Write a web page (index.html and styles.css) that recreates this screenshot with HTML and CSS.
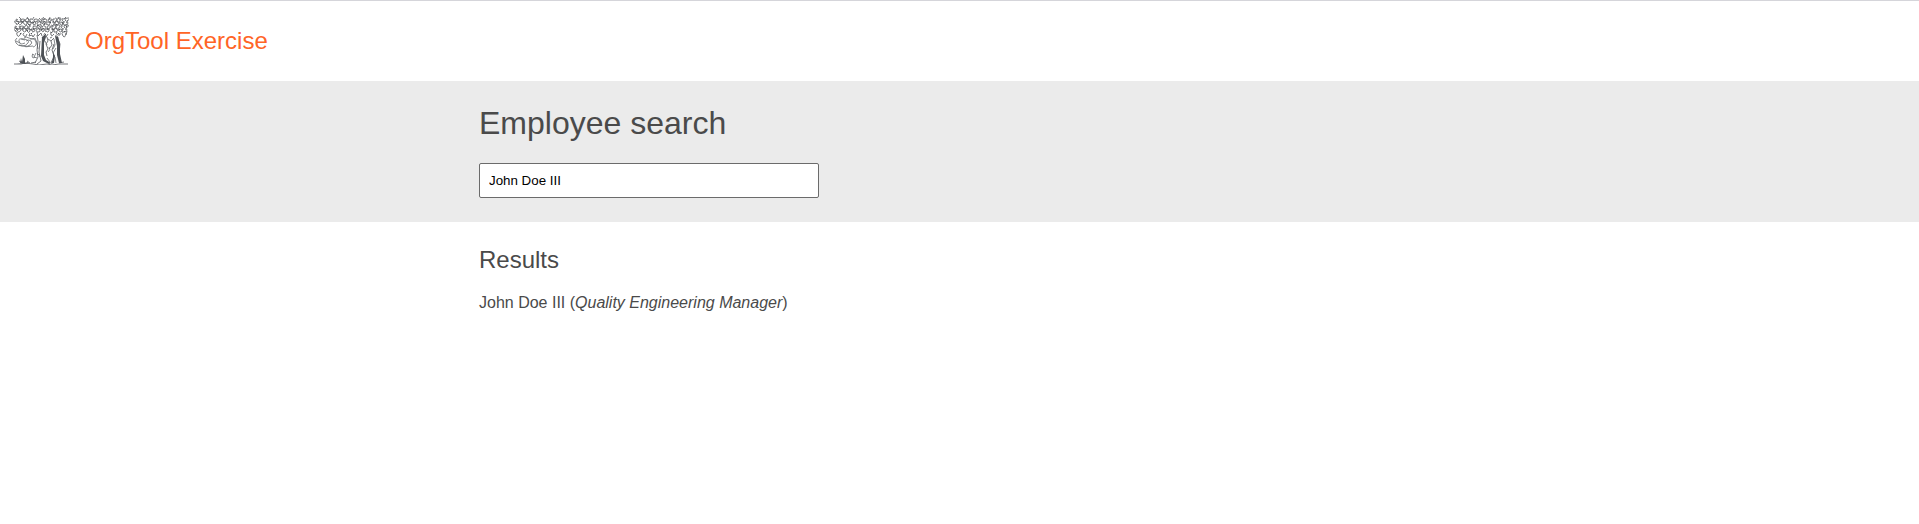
FILE: index.html
```html
<!DOCTYPE html>
<html lang="en">
<head>
<meta charset="utf-8">
<title>OrgTool Exercise</title>
<link rel="stylesheet" href="styles.css">
</head>
<body>
<header class="site-header">
  <svg class="logo" viewBox="0 0 55 48" role="img" aria-label="Tree logo">
    <defs>
      <g id="leaves">
        <path d="M3 2q-2-2-2 0t3 2 1-3M8 1q-3 0-2 2t3 0-1-2M12 4q-3-1-1-3t3 1-2 2M17 1q-3-1-2 2t3 1M22 3q-2 2-3 0t2-2 1 3M25 0q-2 1-1 3t3-1-2 0M31 1q-2-1-3 1t2 2 1-3M36 4q-3 0-3-2t3-1-1 2M40 1q-3-1-2 2t3 0-1-3M45 3q-2 2-3 0t2-3 1 3M49 1q-3-1-2 1t3 2M53 3q-2 1-3-1t3-2-1 3"/>
      </g>
    </defs>
    <g class="foliage">
      <use href="#leaves" x="1" y="1"/>
      <use href="#leaves" x="-55" y="4" transform="scale(-1 1)"/>
      <use href="#leaves" x="0" y="8"/>
      <use href="#leaves" x="-54" y="11" transform="scale(-1 1)"/>
      <path d="M4 15q-2 0-1 3t3 0 1-2M10 16q-2 1 0 3t3-2M16 16l-1 3 3-1 1 2 2-3M23 15l1 4 3-3 1 3M31 16q-2 2 0 3t3-2M38 15q-2 1-1 3t3-1M43 15q-2 2 1 3t2-2M49 15q-2 1 0 4t3-3M53 14l-1 4"/>
      <path d="M5 0l2 2M13 0l2 3M20 0l-2 3M29 0l2 3M36 0l-1 3M44 0l2 3M52 0l-2 2"/>
    </g>
    <g class="specks">
      <path d="M4 6l1 1M9 4l-1 2M14 7l2 1M19 5l1 1M24 8l-1 1M30 6l1 2M37 5l-1 1M42 7l1 1M48 5l1 2M52 9l1 1M2 11l1 2M8 12l2 0M13 13l1 1M20 11l-1 2M27 13l1-1M33 11l1 2M38 13l2-1M46 12l-1 1M50 14l1 1M6 17l1-1M17 16l1 1M31 17l1 1M44 17l1-1"/>
    </g>
    <g class="ink-light">
      <path d="M3 21q-3 2-1 5t6 3 6-3-4-4-5 2 2 3 4-1M10 21q2-2 5 0t6 0M12 24q3-2 5 0t-1 4-5 1M16 22q5-1 6 3t-3 5M5 28q7 3 14 1M7 22l4 1M2 24l4 2M21 21l2 5 1 6"/>
      <path d="M19 37q-2 2 0 4l2-1M22 36l-2 4 3 1M23 37q3 0 3 3M18 37l2 1"/>
    </g>
    <g class="ink">
      <path d="M23 18l1 6-1 9 1 7-3 6M26 24l-1 11 2 9-4 3"/>
      <path d="M28 21q2-4 5-1l1 4-2 3 2 5-2 3 1 4M41 19q3-1 3 3l2 5-1 9 1 9M40 21l-3 3-3-2M37 24l1 4-3 4M40 27l-2 6 2 6-3 7M36 21l2-1"/>
      <path d="M0 47h7l4-1 8 1 6 1 8-1 5 1 7-1h9M5 44l4 2M13 44l3 2M45 46l5-1M17 46l5-1"/>
    </g>
    <g class="shade">
      <path d="M28 20l3-2 1 2-2 6v12l2 5 5 3-2 1-6-3-2-5z"/>
      <path d="M41 19l3 1 2 7v10l2 9h-3l-2-8v-9z"/>
      <path d="M39 35l2 4-1 7-3 1 2-5zM6 46l1-5 1 4 1-7 2 4v4l3-1 1 1zM3 47l8-1 4 1z"/>
    </g>
    <g class="ink-light">
      <path d="M31 24l2 4M34 35q3-2 1-5M40 22l1 6-2 4M42 31l-3 5M33 41l3 4M41 40l1 6"/>
    </g>
  </svg>
  <span class="brand">OrgTool Exercise</span>
</header>
<main>
  <section class="search-band">
    <div class="container">
      <h1 class="page-title"><label for="employee">Employee search</label></h1>
      <input class="search-input" id="employee" type="text" value="John Doe III">
    </div>
  </section>
  <section class="container results">
    <h2 class="results-title">Results</h2>
    <p class="result">John Doe III (<em>Quality Engineering Manager</em>)</p>
  </section>
</main>
</body>
</html>
```
FILE: styles.css
```css
* {
  box-sizing: border-box;
}

body {
  margin: 0;
  background: #fff;
  border-top: 1px solid #d5d5da;
  color: #4a4a4a;
  font: 16px/24px "Liberation Sans", Arial, sans-serif;
}

.site-header {
  display: flex;
  align-items: center;
  gap: 16px;
  padding: 16px 14px;
}

.logo {
  width: 55px;
  height: 48px;
  fill: none;
}

.foliage {
  stroke: #54575b;
  stroke-width: 0.8;
}

.specks {
  stroke: #53565a;
  stroke-width: 1;
}

.ink {
  stroke: #53565a;
  stroke-width: 0.8;
}

.ink-light {
  stroke: #65686c;
  stroke-width: 0.8;
}

.shade {
  fill: #4d5156;
}

.brand {
  color: #ff6426;
  font-size: 24px;
}

.container {
  max-width: 961px;
  margin: 0 auto;
}

.search-band {
  padding: 24px 0;
  background: #ebebeb;
}

.page-title {
  margin: 0 0 22px;
  font-size: 32px;
  font-weight: 400;
  line-height: 36px;
}

.search-input {
  display: block;
  width: 340px;
  max-width: 100%;
  height: 35px;
  padding: 0 9px;
  border: 1px solid #6b6b6b;
  border-radius: 2px;
  background: #fff;
  color: #000;
  font-family: "Liberation Sans", Arial, sans-serif;
}

.results {
  padding: 24px 0;
}

.results-title {
  margin: 0 0 17px;
  font-size: 24px;
  font-weight: 400;
  line-height: 28px;
}

.result {
  margin: 0;
}
```
